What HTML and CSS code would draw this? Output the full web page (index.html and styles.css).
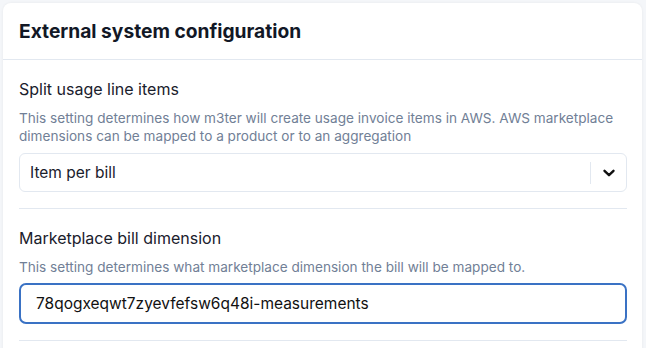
FILE: index.html
```html
<!DOCTYPE html>
<html lang="en">
<head>
    <meta charset="UTF-8">
    <meta name="viewport" content="width=device-width, initial-scale=1.0">
    <title>External system configuration</title>
    <link rel="stylesheet" href="styles.css">
</head>
<body>
    <div class="card">
        <div class="card-header">
            <h2>External system configuration</h2>
        </div>
        <div class="card-body">
            <div class="field">
                <label class="field-label">Split usage line items</label>
                <p class="field-help">This setting determines how m3ter will create usage invoice items in AWS. AWS marketplace dimensions can be mapped to a product or to an aggregation</p>
                <div class="select">
                    <span class="select-value">Item per bill</span>
                    <span class="select-sep"></span>
                    <span class="select-arrow">
                        <svg width="14" height="14" viewBox="0 0 14 14">
                            <path d="M2.5 4.8 L7 9.2 L11.5 4.8" fill="none" stroke="#111" stroke-width="2.4" stroke-linecap="round" stroke-linejoin="round"/>
                        </svg>
                    </span>
                </div>
            </div>
            <div class="field">
                <label class="field-label">Marketplace bill dimension</label>
                <p class="field-help">This setting determines what marketplace dimension the bill will be mapped to.</p>
                <input class="text-input" type="text" value="78qogxeqwt7zyevfefsw6q48i-measurements">
            </div>
        </div>
    </div>
</body>
</html>
```

FILE: styles.css
```css
* {
    box-sizing: border-box;
    margin: 0;
    padding: 0;
}
body {
    font-family: 'Inter', 'Noto Sans', sans-serif;
    background: #f4f6f9;
    color: #1a202c;
    padding: 3px 4px 0 3px;
    overflow: hidden;
}
.card {
    background: #fff;
    border-radius: 8px;
    box-shadow: 0 0 3px rgba(0, 0, 0, 0.06);
}
.card-header {
    height: 57px;
    padding: 0 16px;
    display: flex;
    align-items: center;
    border-bottom: 1px solid #e2e8f0;
}
.card-header h2 {
    font-size: 19.2px;
    font-weight: 700;
    color: #121826;
}
.card-body {
    padding: 0 15px 20px 16px;
}
.field {
    padding: 17px 0 16px;
    border-bottom: 1px solid #e2e8f0;
}
.field-label {
    display: block;
    font-size: 16px;
    line-height: 24px;
    color: #1a202c;
}
.field-help {
    margin-top: 8px;
    font-size: 13.6px;
    line-height: 18px;
    color: #718096;
}
.select {
    margin-top: 8px;
    height: 39px;
    border: 1px solid #e2e8f0;
    border-radius: 6px;
    display: flex;
    align-items: center;
    padding-left: 10px;
}
.select-value {
    flex: 1;
    font-size: 15.5px;
    color: #1a202c;
}
.select-sep {
    width: 1px;
    height: 22px;
    background: #e2e8f0;
}
.select-arrow {
    width: 35px;
    display: flex;
    justify-content: center;
    align-items: center;
}
.select-arrow svg {
    display: block;
}
.text-input {
    display: block;
    width: 100%;
    margin-top: 7px;
    height: 41px;
    border: 2px solid #3a72c4;
    border-radius: 7px;
    padding: 0 15px;
    font-family: inherit;
    font-size: 15.5px;
    color: #111;
    outline: none;
}
```
